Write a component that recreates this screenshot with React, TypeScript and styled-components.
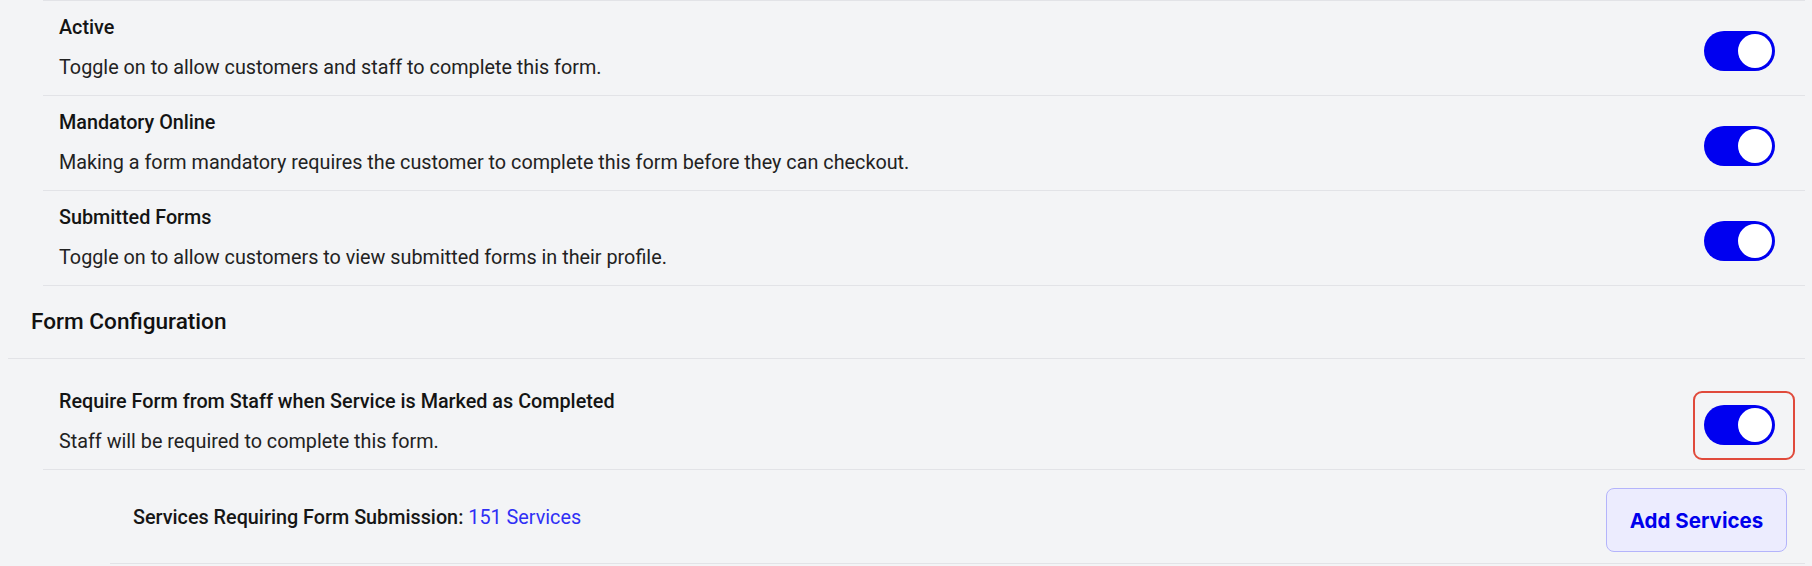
import React from "react";
import styled, { createGlobalStyle } from "styled-components";

const GlobalStyle = createGlobalStyle`
  html, body {
    margin: 0;
    padding: 0;
    background: #f3f4f6;
  }
  body {
    font-family: Roboto, "Liberation Sans", Arial, sans-serif;
    color: #161616;
  }
`;

const Page = styled.div`
  width: 1812px;
  height: 566px;
  overflow: hidden;
  background: #f3f4f6;
  padding-right: 7px;
  box-sizing: border-box;
`;

const SettingList = styled.div<{ $bordered?: boolean }>`
  margin-left: 43px;
  border-top: ${(p) => (p.$bordered ? "1px solid #e2e3e7" : "none")};
`;

const SettingRow = styled.div<{ $top?: number; $bottom?: number }>`
  display: flex;
  align-items: flex-start;
  justify-content: space-between;
  padding: ${(p) => p.$top ?? 15}px 30px ${(p) => p.$bottom ?? 15}px 16px;
  border-bottom: 1px solid #e2e3e7;
`;

const TextBlock = styled.div`
  display: flex;
  flex-direction: column;
  gap: 16px;
`;

const Title = styled.div`
  font-size: 19.8px;
  line-height: 24px;
  font-weight: 500;
  color: #141414;
`;

const Description = styled.div`
  font-size: 19.8px;
  line-height: 24px;
  font-weight: 400;
  color: #222;
`;

const SectionHeader = styled.h2`
  margin: 0 0 0 8px;
  padding: 22px 0 22px 23px;
  font-size: 22.6px;
  line-height: 28px;
  font-weight: 500;
  color: #111;
  border-bottom: 1px solid #e2e3e7;
`;

const Switch = styled.button<{ $on: boolean; $offset?: number }>`
  position: relative;
  flex: none;
  width: 71px;
  height: 40px;
  margin-top: ${(p) => p.$offset ?? 0}px;
  padding: 0;
  border: none;
  border-radius: 20px;
  background: ${(p) => (p.$on ? "#0000f0" : "#c9cbd2")};
  cursor: pointer;

  &::after {
    content: "";
    position: absolute;
    top: 3px;
    left: ${(p) => (p.$on ? "34px" : "3px")};
    width: 34px;
    height: 34px;
    border-radius: 50%;
    background: #fff;
  }
`;

const Highlight = styled.div`
  flex: none;
  margin-top: 1px;
  margin-right: -20px;
  padding: 12px 18px 13px 9px;
  border: 2px solid #e04a3b;
  border-radius: 9px;
  display: flex;
`;

const ServicesRow = styled.div`
  margin-left: 110px;
  display: flex;
  align-items: center;
  justify-content: space-between;
  padding: 18px 18px 11px 23px;
  border-bottom: 1px solid #e2e3e7;
`;

const ServicesLabel = styled.div`
  font-size: 19.8px;
  line-height: 24px;
  font-weight: 500;
  color: #161616;
  margin-top: -4px;

  a {
    font-weight: 400;
    color: #2f2ff5;
    text-decoration: none;
  }
`;

const AddButton = styled.button`
  width: 181px;
  height: 64px;
  border: 1.5px solid #b4b4fb;
  border-radius: 8px;
  background: #ececfe;
  color: #0000ec;
  font-family: Inter, "Liberation Sans", Arial, sans-serif;
  font-size: 20.5px;
  font-weight: 700;
  cursor: pointer;
`;

const settings = [
  {
    title: "Active",
    text: "Toggle on to allow customers and staff to complete this form.",
  },
  {
    title: "Mandatory Online",
    text: "Making a form mandatory requires the customer to complete this form before they can checkout.",
  },
  {
    title: "Submitted Forms",
    text: "Toggle on to allow customers to view submitted forms in their profile.",
  },
];

export default function App() {
  return (
    <Page>
      <GlobalStyle />
      <SettingList $bordered>
        {settings.map((s) => (
          <SettingRow key={s.title}>
            <TextBlock>
              <Title>{s.title}</Title>
              <Description>{s.text}</Description>
            </TextBlock>
            <Switch $on $offset={15} aria-label={s.title} />
          </SettingRow>
        ))}
      </SettingList>

      <SectionHeader>Form Configuration</SectionHeader>

      <SettingList>
        <SettingRow $top={31} $bottom={9}>
          <TextBlock>
            <Title>Require Form from Staff when Service is Marked as Completed</Title>
            <Description>Staff will be required to complete this form.</Description>
          </TextBlock>
          <Highlight>
            <Switch $on aria-label="Require form from staff" />
          </Highlight>
        </SettingRow>
      </SettingList>

      <ServicesRow>
        <ServicesLabel>
          Services Requiring Form Submission: <a href="#">151 Services</a>
        </ServicesLabel>
        <AddButton>Add Services</AddButton>
      </ServicesRow>
    </Page>
  );
}
